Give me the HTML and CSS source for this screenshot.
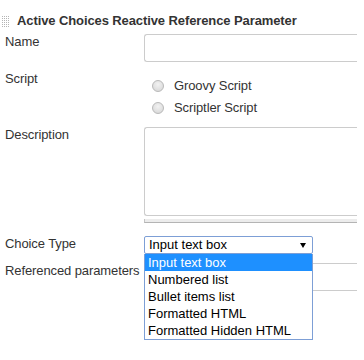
FILE: index.html
```html
<!doctype html>
<html>
<head>
<title>Active Choices Reactive Reference Parameter</title>
<meta charset="utf-8">
<link rel="stylesheet" href="styles.css">
</head>
<body>
<div class="block">
	<div class="head">
		<span class="grip"></span>
		<span class="title">Active Choices Reactive Reference Parameter</span>
	</div>
	<div class="row row_name">
		<div class="label">Name</div>
		<div class="field"><div class="text_box"></div></div>
	</div>
	<div class="row row_script">
		<div class="label">Script</div>
		<div class="field radios">
			<div class="radio_line"><span class="radio"></span>Groovy Script</div>
			<div class="radio_line"><span class="radio"></span>Scriptler Script</div>
		</div>
	</div>
	<div class="row row_desc">
		<div class="label">Description</div>
		<div class="field">
			<div class="text_area"></div>
			<div class="resize_bar"></div>
		</div>
	</div>
	<div class="row row_choice">
		<div class="label">Choice Type</div>
		<div class="field">
			<div class="select">Input text box<span class="arrow"></span></div>
			<ul class="options">
				<li class="selected">Input text box</li>
				<li>Numbered list</li>
				<li>Bullet items list</li>
				<li>Formatted HTML</li>
				<li>Formatted Hidden HTML</li>
			</ul>
		</div>
	</div>
	<div class="row row_ref">
		<div class="label">Referenced parameters</div>
		<div class="field"><div class="text_box"></div></div>
	</div>
</div>
</body>
</html>
```

FILE: styles.css
```css
html,body{margin:0;padding:0;background:#fff;}
body{font:13px/16px "Liberation Sans",Arial,sans-serif;color:#333;letter-spacing:-0.1px;min-height:360px;}
ul{padding:0;margin:0;}
li{margin:0;padding:0;list-style-type:none;}

.block{width:357px;padding:13px 0 69px;}
.head{display:flex;align-items:flex-start;height:16px;}
.grip{width:8px;height:12px;margin:2px 8px 0 1px;
	background-image:linear-gradient(90deg,#fff 1px,transparent 1px),linear-gradient(#fff 1px,#b4b4b4 1px);
	background-size:2px 2px;}
.title{font-weight:bold;color:#333;}

.row{display:flex;align-items:flex-start;}
.label{width:139px;padding-left:5px;flex:none;}
.field{flex:1;position:relative;}

.row_name{margin-top:5px;}
.row_script{margin-top:9px;}
.row_desc{margin-top:8px;}
.row_choice{margin-top:13px;position:relative;z-index:2;}
.row_ref{margin-top:9px;}

.text_box{height:26px;border:1px solid #ccc;border-right:none;border-radius:3px 0 0 3px;}
.text_area{height:87px;border:1px solid #ccc;border-right:none;border-radius:3px 0 0 3px;}
.resize_bar{height:3px;margin-top:3px;background:#ececec;border-left:1px solid #c4c4c4;border-bottom:1px solid #b4b4b4;}

.radios{padding-top:4px;}
.radio_line{display:flex;align-items:center;height:22px;line-height:22px;color:#333;}
.radio{width:10px;height:10px;margin:0 10px 0 8px;border-radius:50%;
	border:1px solid #b9b9b9;background:radial-gradient(circle at 50% 35%,#f2f2f2,#d4d4d4);}

.select{width:157px;height:16px;padding:0 6px 0 4px;border:1px solid #7d9fd6;border-radius:2px;letter-spacing:0;
	color:#000;display:flex;align-items:center;justify-content:space-between;}
.arrow{width:0;height:0;border-left:3px solid transparent;border-right:3px solid transparent;border-top:5px solid #000;}

.options{position:absolute;left:0;top:18px;width:167px;border:1px solid #7d9fd6;border-top:none;background:#fff;letter-spacing:0;}
.options li{height:17px;line-height:17px;padding-left:3px;color:#000;}
.options li.selected{background:#1e90ff;color:#fff;}
```
